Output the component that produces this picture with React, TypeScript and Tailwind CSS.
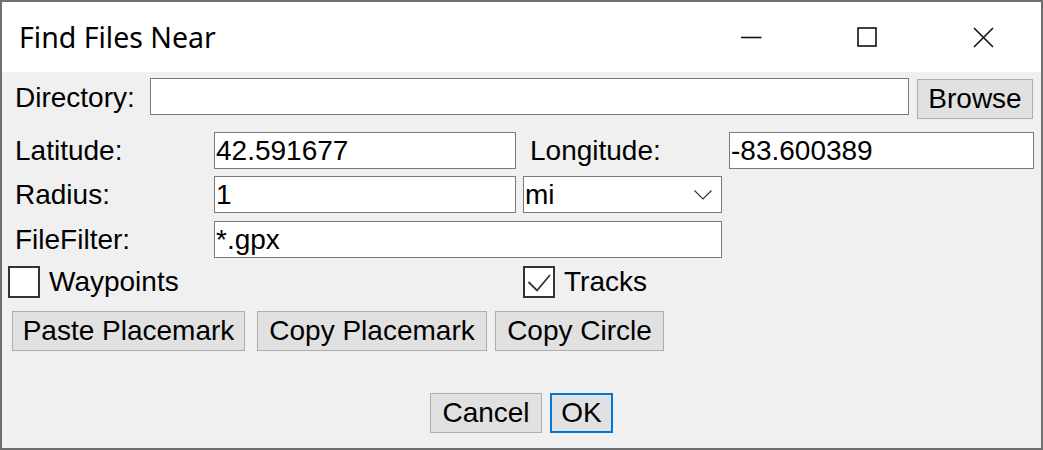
const sans = "font-['Liberation_Sans',Arial,sans-serif]";

function TextBox({ value = "", className = "" }: { value?: string; className?: string }) {
  return (
    <div
      className={`flex h-[37px] items-center border border-[#7a7a7a] bg-white pl-[1px] leading-none ${className}`}
    >
      {value}
    </div>
  );
}

function Button({ label, className = "", primary = false }: { label: string; className?: string; primary?: boolean }) {
  return (
    <div
      className={`flex h-[40px] items-center justify-center bg-[#e1e1e1] leading-none ${
        primary ? "border-2 border-[#0078d7]" : "border border-[#adadad]"
      } ${className}`}
    >
      {label}
    </div>
  );
}

function CheckBox({ checked, label }: { checked: boolean; label: string }) {
  return (
    <div className="flex items-center gap-[9px]">
      <div className="h-[32px] w-[32px] border-2 border-[#333333] bg-white">
        {checked ? (
          <svg width="28" height="28" viewBox="0 0 28 28" fill="none">
            <path d="M3.5 14 L12 22.5 L25 7" stroke="#333333" strokeWidth="1.8" />
          </svg>
        ) : null}
      </div>
      <span className="leading-none">{label}</span>
    </div>
  );
}

export default function App() {
  return (
    <div className="flex h-[450px] w-[1043px] flex-col border-2 border-[#6f6f6f] bg-white text-black">
      <div className="flex h-[70px] shrink-0 items-center bg-white">
        <span className="pl-[17px] font-['Noto_Sans',sans-serif] text-[28.5px] leading-none">Find Files Near</span>
        <div className="ml-auto flex h-full">
          <div className="flex w-[116px] items-center justify-center">
            <svg width="21" height="20" viewBox="0 0 21 20">
              <path d="M0 10.5 H20.5" stroke="#111" strokeWidth="1.6" />
            </svg>
          </div>
          <div className="flex w-[116px] items-center justify-center">
            <svg width="21" height="20" viewBox="0 0 21 20" fill="none">
              <rect x="1" y="1" width="18" height="18" stroke="#111" strokeWidth="1.6" />
            </svg>
          </div>
          <div className="flex w-[116px] items-center justify-center">
            <svg width="21" height="21" viewBox="0 0 21 21" fill="none">
              <path d="M1 1 L20 20 M20 1 L1 20" stroke="#111" strokeWidth="1.6" />
            </svg>
          </div>
        </div>
      </div>

      <div className={`flex flex-1 flex-col bg-[#f0f0f0] pt-[6px] text-[28px] ${sans}`}>
        <div className="flex h-[40px] items-start pl-[13px]">
          <span className="w-[135px] self-center leading-none">Directory:</span>
          <TextBox className="w-[759px]" />
          <Button label="Browse" className="ml-[8px] mt-[1px] h-[39px] w-[116px]" />
        </div>

        <div className="mt-[14px] flex h-[37px] items-center pl-[13px]">
          <span className="w-[199px] leading-none">Latitude:</span>
          <TextBox value="42.591677" className="w-[302px]" />
          <span className="ml-[14px] w-[199px] leading-none">Longitude:</span>
          <TextBox value="-83.600389" className="w-[305px]" />
        </div>

        <div className="mt-[7px] flex h-[37px] items-center pl-[13px]">
          <span className="w-[199px] leading-none">Radius:</span>
          <TextBox value="1" className="w-[302px]" />
          <div className="ml-[7px] flex h-[37px] w-[199px] items-center justify-between border border-[#7a7a7a] bg-white pl-[1px] pr-[9px] leading-none">
            <span>mi</span>
            <svg width="18" height="10" viewBox="0 0 18 10" fill="none">
              <path d="M0.5 0.5 L9 9 L17.5 0.5" stroke="#333" strokeWidth="1.1" />
            </svg>
          </div>
        </div>

        <div className="mt-[8px] flex h-[37px] items-center pl-[13px]">
          <span className="w-[199px] leading-none">FileFilter:</span>
          <TextBox value="*.gpx" className="w-[508px]" />
        </div>

        <div className="mt-[7px] flex h-[33px] items-center pl-[6px]">
          <div className="w-[515px]">
            <CheckBox checked={false} label="Waypoints" />
          </div>
          <CheckBox checked label="Tracks" />
        </div>

        <div className="mt-[13px] flex h-[40px] items-center gap-[12px] pl-[10px]">
          <Button label="Paste Placemark" className="w-[233px]" />
          <Button label="Copy Placemark" className="w-[230px]" />
          <Button label="Copy Circle" className="-ml-[4px] w-[169px]" />
        </div>

        <div className="mt-[42px] flex h-[40px] items-center justify-center gap-[8px]">
          <Button label="Cancel" className="w-[112px]" />
          <Button label="OK" primary className="w-[63px]" />
        </div>
      </div>
    </div>
  );
}
